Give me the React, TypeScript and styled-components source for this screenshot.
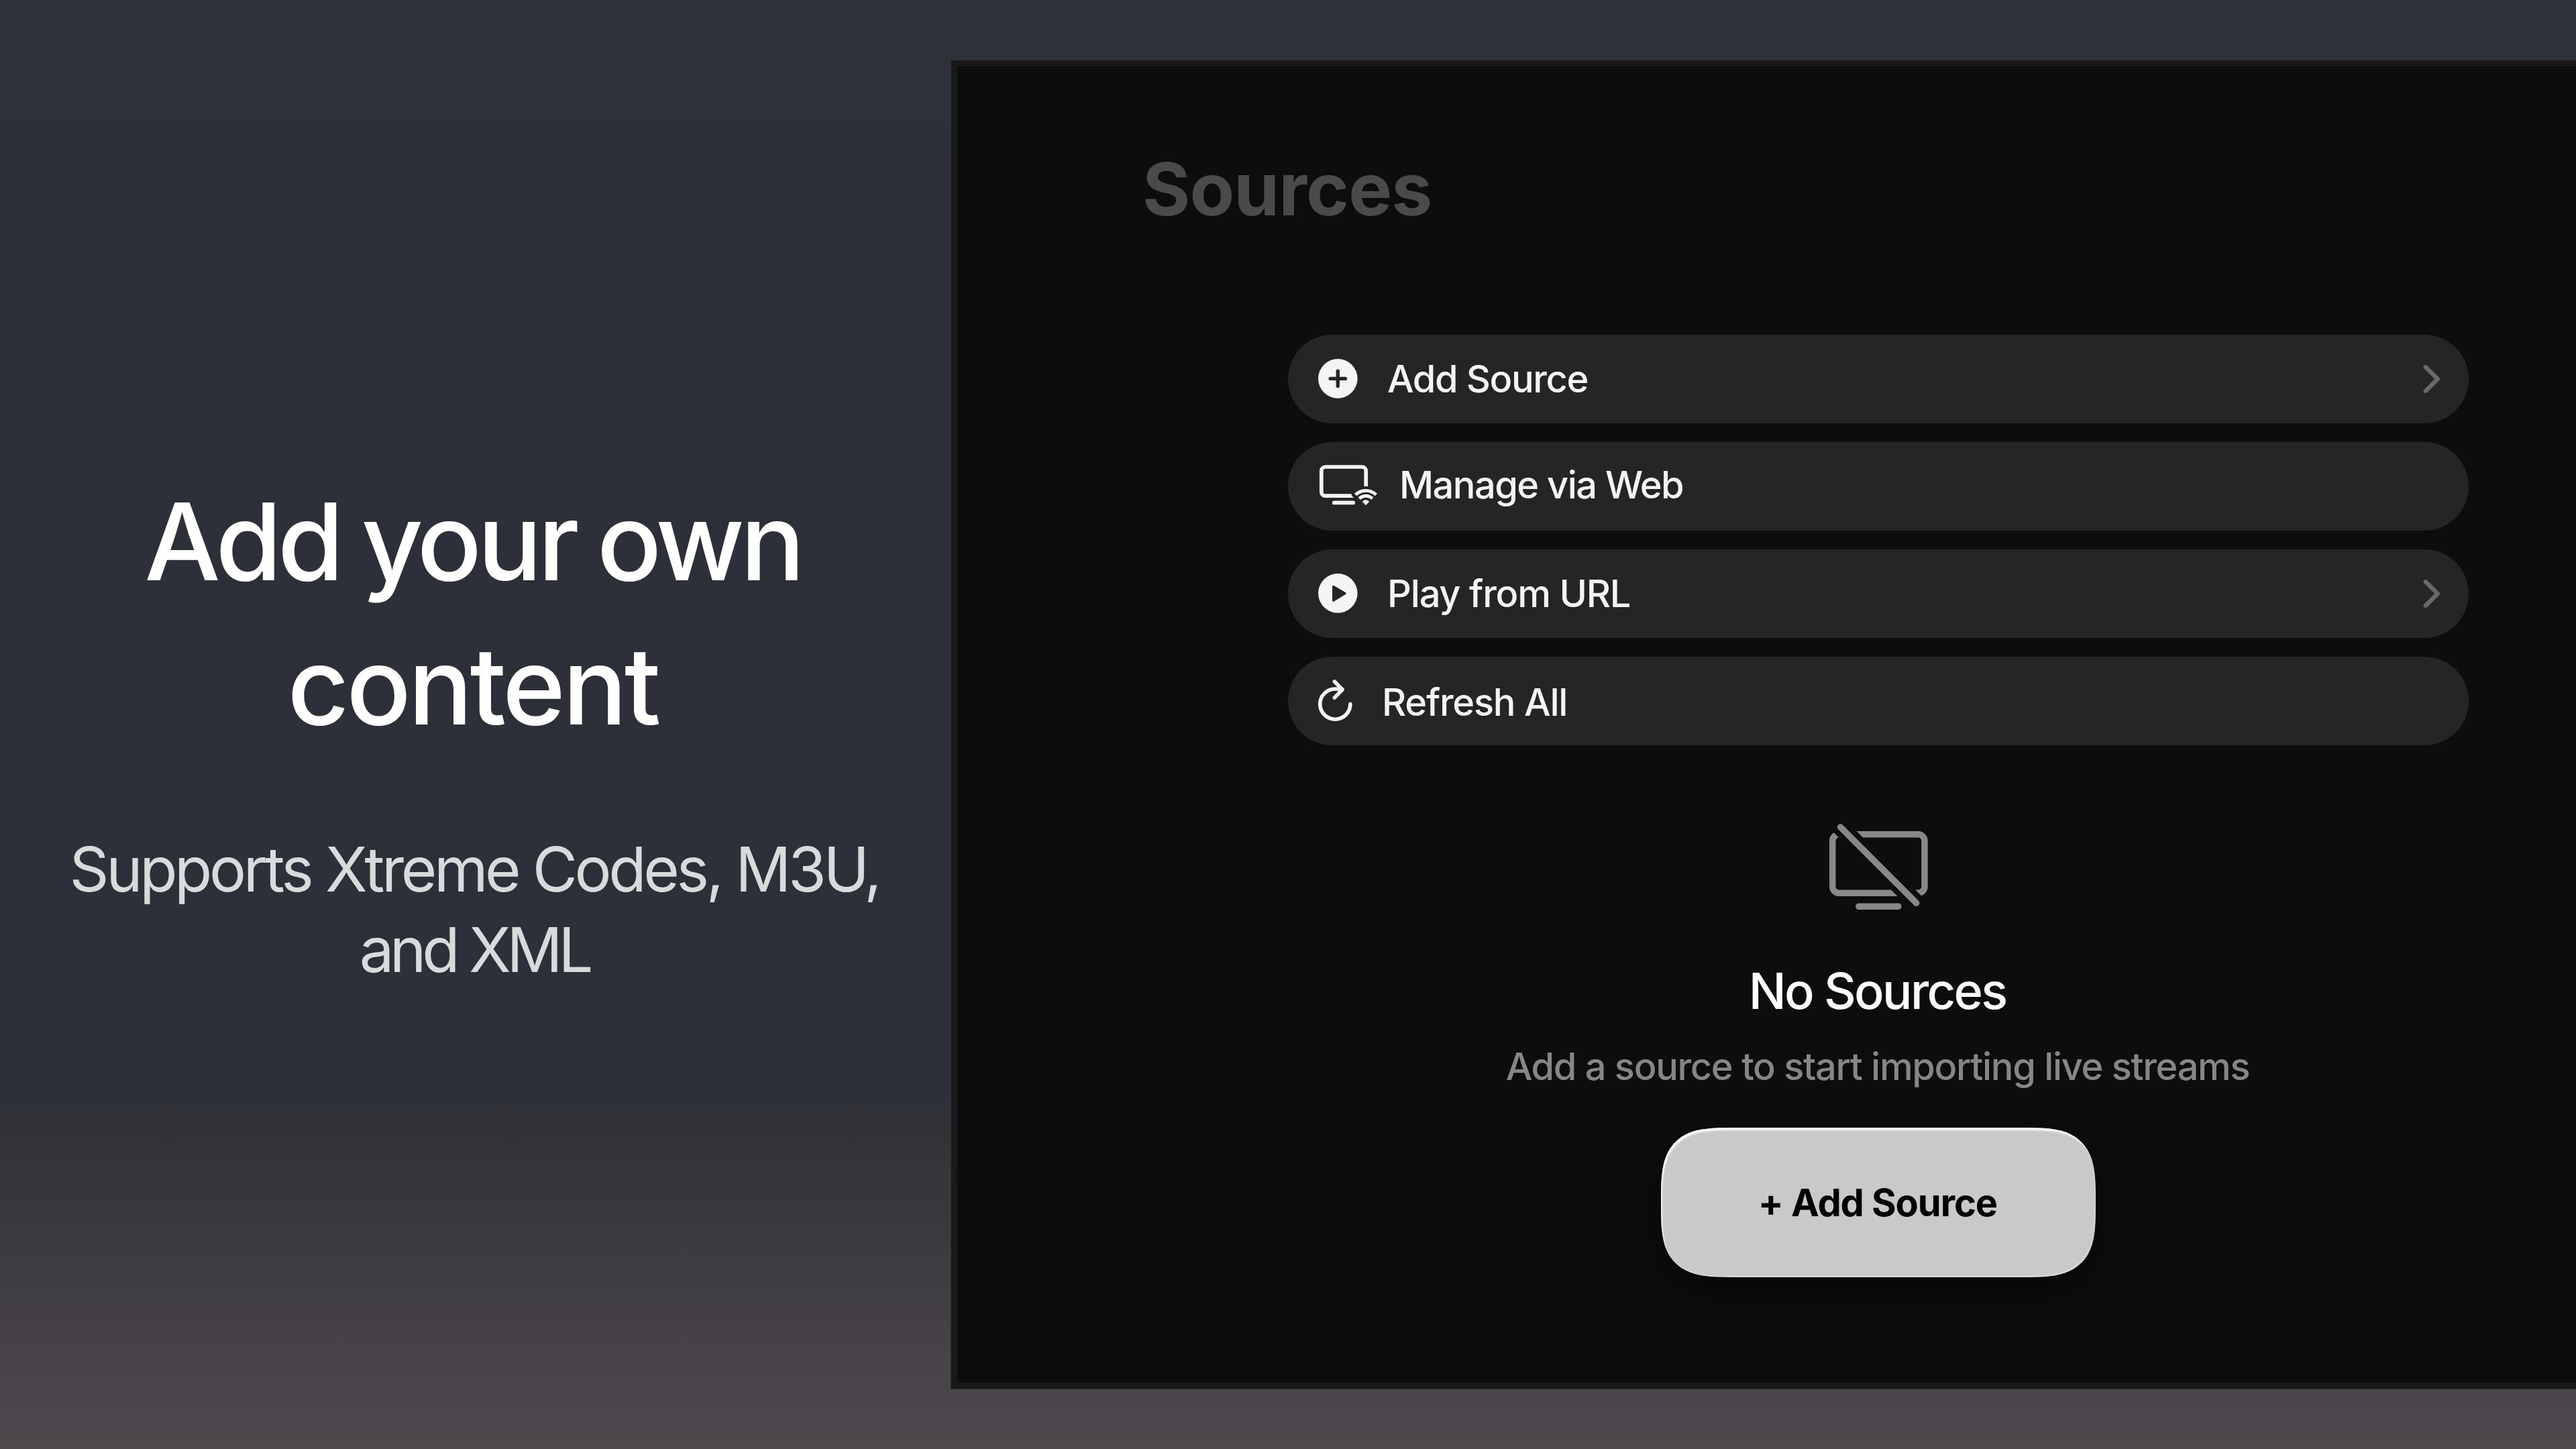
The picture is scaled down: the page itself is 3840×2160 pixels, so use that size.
import React from "react";
import styled, { createGlobalStyle } from "styled-components";

const GlobalStyle = createGlobalStyle`
  *, *::before, *::after { box-sizing: border-box; }
  body { margin: 0; background: #2d3038; }
`;

const Stage = styled.main`
  display: flex;
  align-items: flex-start;
  width: 3840px;
  height: 2160px;
  overflow: hidden;
  font-family: Inter, "Liberation Sans", sans-serif;
  background: linear-gradient(
    180deg,
    #2e3239 0,
    #2d3038 300px,
    #2d3038 1620px,
    #313236 1680px,
    #37363a 1765px,
    #413e43 1925px,
    #4f494e 2160px
  );
`;

const Pitch = styled.section`
  flex: 0 0 1417px;
  display: flex;
  flex-direction: column;
  gap: 106px;
  padding-top: 700px;
  text-align: center;
`;

const Headline = styled.h1`
  margin: 0;
  padding-right: 8px;
  color: #fff;
  font-size: 160px;
  line-height: 215px;
  font-weight: 500;
`;

const Tagline = styled.p`
  margin: 0;
  padding-right: 3px;
  color: #d9dadc;
  font-size: 92px;
  line-height: 120px;
  font-weight: 400;
`;

const Line = styled.span<{ $tracking: number; $wordGap?: number }>`
  display: block;
  white-space: nowrap;
  letter-spacing: ${(p) => p.$tracking}px;
  word-spacing: ${(p) => p.$wordGap ?? 0}px;
`;

const Screen = styled.section`
  flex: 1;
  display: flex;
  height: 1982px;
  margin-top: 89px;
  border: 1px solid #303032;
  border-right: 0;
`;

const Panel = styled.div`
  flex: 1;
  display: flex;
  flex-direction: column;
  padding: 116px 160px 0 493px;
  border: 9px solid #191919;
  border-right: 0;
  background: #0d0d0f;
`;

const PanelTitle = styled.h2`
  margin: 0 0 152px -217px;
  color: #4a4a4a;
  font-size: 109px;
  line-height: 132px;
  font-weight: 700;
  letter-spacing: -0.95px;
`;

const Menu = styled.nav`
  display: flex;
  flex-direction: column;
  gap: 28px;
`;

const MenuRow = styled.div`
  display: flex;
  align-items: center;
  gap: 34px;
  height: 132px;
  padding: 0 40px 0 45px;
  border-radius: 66px;
  background: #252527;
  color: #f4f4f5;
`;

const MenuLabel = styled.span<{ $drop: number; $tracking: number }>`
  flex: 1;
  margin-left: -1px;
  padding-top: ${(p) => Math.max(p.$drop, 0) * 2}px;
  padding-bottom: ${(p) => Math.max(-p.$drop, 0) * 2}px;
  font-size: 56px;
  line-height: 68px;
  font-weight: 500;
  letter-spacing: ${(p) => p.$tracking}px;
`;

const RowIcon = styled.svg`
  flex: none;
  display: block;
  height: 132px;
  overflow: visible;
`;

const Chevron = styled.svg`
  flex: none;
  display: block;
  width: 30px;
  height: 48px;
`;

const Empty = styled.section`
  display: flex;
  flex-direction: column;
  align-items: center;
  padding-top: 109px;
`;

const EmptyIcon = styled.svg`
  display: block;
  width: 160px;
  height: 150px;
`;

const EmptyTitle = styled.h3`
  margin: 62px 0 34px;
  padding-right: 3px;
  color: #fff;
  font-size: 74px;
  line-height: 90px;
  font-weight: 500;
  letter-spacing: -2.7px;
`;

const EmptyText = styled.p`
  margin: 0 0 57px;
  padding-right: 2px;
  color: #868686;
  font-size: 56px;
  line-height: 68px;
  font-weight: 500;
  letter-spacing: -1.33px;
`;

const AddButton = styled.button`
  width: 648px;
  height: 223px;
  padding: 0 2px 0 0;
  border: 0;
  border-radius: 76px;
  background: #c9c9cb;
  color: #000;
  font: 700 56px/68px Inter, "Liberation Sans", sans-serif;
  letter-spacing: -1.08px;
  box-shadow:
    inset 2px 4px 2px rgba(255, 255, 255, 0.85),
    inset -1px -2px 2px rgba(255, 255, 255, 0.35),
    0 20px 50px rgba(0, 0, 0, 0.55);

  @supports (corner-shape: superellipse(1.6)) {
    border-radius: 108px;
    corner-shape: superellipse(1.65);
  }
`;

const AddIcon = () => (
  <RowIcon width="70" viewBox="0 0 70 132">
    <circle cx="29.3" cy="65.4" r="29.3" fill="#f4f4f5" />
    <path d="M18.2 65.4h22.2M29.3 54.3v22.2" stroke="#252527" strokeWidth="5.4" strokeLinecap="round" />
  </RowIcon>
);

const WebIcon = () => (
  <RowIcon width="88" viewBox="0 0 88 132" fill="none" stroke="#f4f4f5" strokeWidth="5.7">
    <path d="M71.2 66V43a6 6 0 0 0-6-6H10.8a6 6 0 0 0-6 6v31.2a6 6 0 0 0 6 6H53" />
    <path d="M49.3 77a9 9 0 0 0 4.7 6.4V77z" fill="#252527" stroke="none" />
    <path d="M23.8 90.4h28.4" strokeLinecap="round" />
    <path d="M55.7 78.6a22 22 0 0 1 30.6 0M61.2 84.3a14 14 0 0 1 19.6 0" strokeWidth="4.9" />
    <path
      d="M71 93l-4-4.2a6 6 0 0 1 8 0z"
      fill="#f4f4f5"
      strokeWidth="1.8"
      strokeLinejoin="round"
    />
  </RowIcon>
);

const PlayIcon = () => (
  <RowIcon width="70" viewBox="0 0 70 132">
    <circle cx="29.3" cy="65.4" r="29.3" fill="#f4f4f5" />
    <path
      d="M22.7 55.4L40 65.6 22.7 76z"
      fill="#252527"
      stroke="#252527"
      strokeWidth="3.4"
      strokeLinejoin="round"
    />
  </RowIcon>
);

const RefreshIcon = () => (
  <RowIcon
    width="62"
    viewBox="0 0 62 132"
    fill="none"
    stroke="#f4f4f5"
    strokeWidth="5.6"
    strokeLinecap="round"
    strokeLinejoin="round"
  >
    <path d="M47.9 70.6A22.6 22.6 0 1 1 25.3 48q5 0 10.5 1" />
    <path d="M24.3 36.9L36 49 24.3 61.1" />
  </RowIcon>
);

const NoTvIcon = () => (
  <EmptyIcon viewBox="0 0 160 150" fill="none" stroke="#888" strokeWidth="9.5" strokeLinecap="round">
    <mask id="slash-gap" maskUnits="userSpaceOnUse" x="0" y="0" width="160" height="150">
      <rect width="160" height="150" fill="#fff" stroke="none" />
      <path d="M3.3-7.2L156.7 146" stroke="#000" strokeWidth="25.5" />
    </mask>
    <rect x="11.75" y="23.75" width="137.2" height="87.5" rx="9.5" mask="url(#slash-gap)" />
    <path d="M50.8 131.2h59.1M23.5 13l113.2 113.2" />
  </EmptyIcon>
);

const rows = [
  { label: "Add Source", Icon: AddIcon, chevron: true, drop: 0, tracking: -1.4 },
  { label: "Manage via Web", Icon: WebIcon, chevron: false, drop: -2, tracking: -1.55 },
  { label: "Play from URL", Icon: PlayIcon, chevron: true, drop: 0, tracking: -1.2 },
  { label: "Refresh All", Icon: RefreshIcon, chevron: false, drop: 2, tracking: -1.25 },
];

export default function App() {
  return (
    <Stage>
      <GlobalStyle />
      <Pitch>
        <Headline>
          <Line $tracking={-6.3} $wordGap={-4}>Add your own</Line>
          <Line $tracking={-4.3}>content</Line>
        </Headline>
        <Tagline>
          <Line $tracking={-4.4}>Supports Xtreme Codes, M3U,</Line>
          <Line $tracking={-6.2}>and XML</Line>
        </Tagline>
      </Pitch>
      <Screen>
        <Panel>
          <PanelTitle>Sources</PanelTitle>
          <Menu>
            {rows.map(({ label, Icon, chevron, drop, tracking }) => (
              <MenuRow key={label}>
                <Icon />
                <MenuLabel $drop={drop} $tracking={tracking}>{label}</MenuLabel>
                {chevron && (
                  <Chevron viewBox="0 0 30 48" fill="none">
                    <path
                      d="M5.9 6.3L23.8 24 5.9 41.7"
                      stroke="#69696b"
                      strokeWidth="6.4"
                      strokeLinecap="round"
                      strokeLinejoin="round"
                    />
                  </Chevron>
                )}
              </MenuRow>
            ))}
          </Menu>
          <Empty>
            <NoTvIcon />
            <EmptyTitle>No Sources</EmptyTitle>
            <EmptyText>Add a source to start importing live streams</EmptyText>
            <AddButton>+ Add Source</AddButton>
          </Empty>
        </Panel>
      </Screen>
    </Stage>
  );
}
